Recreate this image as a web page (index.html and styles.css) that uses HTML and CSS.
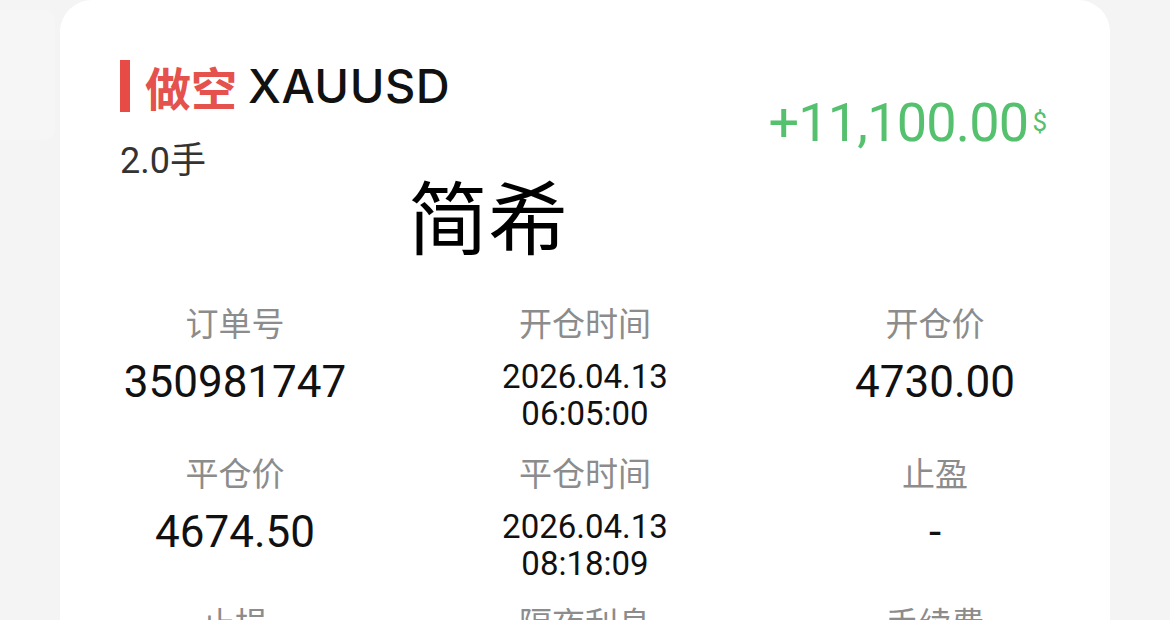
FILE: index.html
```html
<!DOCTYPE html>
<html lang="zh-CN">
<head>
<meta charset="utf-8">
<title>XAUUSD 订单</title>
<link rel="stylesheet" href="styles.css">
</head>
<body>
<div class="page">
  <div class="peek"></div>
  <main class="card">
    <header class="head">
      <div class="head-left">
        <div class="title">
          <span class="bar"></span>
          <span class="dir">做空</span>
          <span class="sym">XAUUSD</span>
        </div>
        <div class="lots">2.0手</div>
      </div>
      <div class="profit">
        <span class="amount">+11,100.00</span>
        <span class="cur">$</span>
      </div>
    </header>
    <div class="name">简希</div>
    <section class="grid">
      <div class="cell"><div class="label">订单号</div><div class="value">350981747</div></div>
      <div class="cell"><div class="label">开仓时间</div><div class="value date">2026.04.13<br>06:05:00</div></div>
      <div class="cell"><div class="label">开仓价</div><div class="value">4730.00</div></div>
      <div class="cell"><div class="label">平仓价</div><div class="value">4674.50</div></div>
      <div class="cell"><div class="label">平仓时间</div><div class="value date">2026.04.13<br>08:18:09</div></div>
      <div class="cell"><div class="label">止盈</div><div class="value">-</div></div>
      <div class="cell"><div class="label">止损</div></div>
      <div class="cell"><div class="label">隔夜利息</div></div>
      <div class="cell"><div class="label">手续费</div></div>
    </section>
  </main>
</div>
</body>
</html>
```

FILE: styles.css
```css
* { box-sizing: border-box; }
html, body {
  margin: 0;
  padding: 0;
  background: #f4f4f4;
  height: 620px;
  overflow: hidden;
}
.page {
  display: flex;
  align-items: flex-start;
}
.peek {
  width: 55px;
  height: 130px;
  margin-top: 10px;
  margin-right: 5px;
  background: #f5f6f5;
  border-radius: 0 10px 10px 0;
}
.card {
  width: 1050px;
  height: 700px;
  background: #ffffff;
  border-radius: 32px 32px 0 0;
}
.head {
  display: flex;
  justify-content: space-between;
  align-items: flex-start;
  padding: 60px 63px 0 60px;
}
.title {
  display: flex;
  align-items: center;
  height: 52px;
}
.bar {
  width: 10px;
  height: 52px;
  background: #e84b46;
}
.dir {
  margin-left: 15px;
  font-family: "Noto Sans CJK SC", sans-serif;
  font-size: 46px;
  font-weight: 700;
  line-height: 52px;
  color: #e5514c;
}
.sym {
  margin-left: 11px;
  font-family: Inter, "Noto Sans", sans-serif;
  font-size: 47px;
  font-weight: 500;
  line-height: 52px;
  letter-spacing: 0.5px;
  color: #111;
}
.lots {
  margin-top: 29px;
  font-family: Roboto, "Noto Sans CJK SC", sans-serif;
  font-size: 36px;
  line-height: 40px;
  color: #333;
}
.profit {
  display: flex;
  align-items: flex-start;
  margin-top: 33px;
  color: #55c06d;
  font-family: Roboto, sans-serif;
}
.amount {
  font-size: 54px;
  line-height: 60px;
  letter-spacing: -0.8px;
}
.cur {
  margin-left: 4px;
  margin-top: 14px;
  font-size: 26px;
  line-height: 30px;
}
.name {
  margin-top: -8px;
  padding-left: 348px;
  font-family: "Noto Sans CJK SC", sans-serif;
  font-size: 80px;
  line-height: 80px;
  color: #000;
}
.grid {
  display: grid;
  grid-template-columns: repeat(3, 1fr);
  row-gap: 22px;
  margin-top: 51px;
  text-align: center;
}
.label {
  font-family: "Noto Sans CJK SC", sans-serif;
  font-size: 33px;
  line-height: 36px;
  color: #8c8c8c;
}
.value {
  margin-top: 18px;
  font-family: Roboto, sans-serif;
  font-size: 44px;
  line-height: 48px;
  color: #111;
}
.value.date {
  font-size: 33px;
  line-height: 37px;
}
```
